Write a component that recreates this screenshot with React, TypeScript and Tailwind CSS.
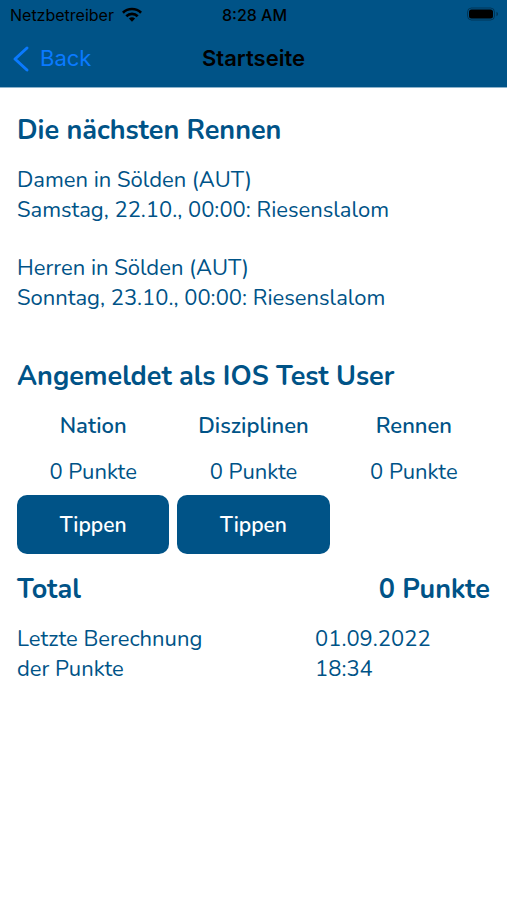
import React from 'react';

const races = [
  { title: 'Damen in Sölden (AUT)', event: 'Samstag, 22.10., 00:00: Riesenslalom' },
  { title: 'Herren in Sölden (AUT)', event: 'Sonntag, 23.10., 00:00: Riesenslalom' }
];

const categories = [
  { name: 'Nation', points: 0, open: true },
  { name: 'Disziplinen', points: 0, open: true },
  { name: 'Rennen', points: 0, open: false }
];

function WifiIcon() {
  return (
    <svg className="h-4 w-5" viewBox="0 0 20 16" fill="none" stroke="black" strokeWidth="2.7" aria-hidden="true">
      <path d="M0.9 5.7a13 13 0 0 1 18.2 0" />
      <path d="M4.3 9.2a8.2 8.2 0 0 1 11.4 0" />
      <path d="M10 14.7 6.9 11.6a4.5 4.5 0 0 1 6.2 0z" fill="black" stroke="none" />
    </svg>
  );
}

function BatteryIcon() {
  return (
    <svg className="h-4 w-8" viewBox="0 0 32 16" aria-hidden="true">
      <rect x="0.5" y="1" width="27" height="12" rx="4" fill="none" stroke="black" strokeOpacity="0.35" />
      <rect x="2" y="2.5" width="24" height="9" rx="2.5" fill="black" />
      <path d="M29.5 4.8c2 .8 2 3.6 0 4.4z" fill="black" fillOpacity="0.4" />
    </svg>
  );
}

function StatusBar() {
  return (
    <div className="grid grid-cols-3 items-center h-[30px] pl-[10px] pr-2 text-base text-black">
      <div className="flex items-center gap-2">
        <span>Netzbetreiber</span>
        <WifiIcon />
      </div>
      <span className="text-center font-medium">8:28 AM</span>
      <div className="flex justify-end">
        <BatteryIcon />
      </div>
    </div>
  );
}

function NavBar() {
  return (
    <nav className="grid grid-cols-3 items-center h-[57px] px-3">
      <a href="#back" className="flex items-center gap-2.5 text-[22px] text-[#0a7aff]">
        <svg className="h-7 w-[18px]" viewBox="0 0 18 28" fill="none" stroke="currentColor" strokeWidth="3" strokeLinecap="round" strokeLinejoin="round" aria-hidden="true">
          <path d="M15 3 3 14l12 11" />
        </svg>
        Back
      </a>
      <h1 className="text-center text-[22px] font-semibold text-black">Startseite</h1>
    </nav>
  );
}

export default function App() {
  return (
    <div className="min-h-screen bg-white">
      <header className="bg-[#005387] border-b border-[#8db3cc] font-[Inter,sans-serif]">
        <StatusBar />
        <NavBar />
      </header>

      <main className="px-[17px] pt-[25px] font-[Nunito,'Open_Sans',sans-serif] text-[22px] leading-[30px] text-[#005387]">
        <section>
          <h2 className="text-[27px] leading-9 font-bold">Die nächsten Rennen</h2>
          <div className="mt-4 flex flex-col gap-7">
            {races.map((race) => (
              <div key={race.title}>
                <p>{race.title}</p>
                <p>{race.event}</p>
              </div>
            ))}
          </div>
        </section>

        <section className="mt-[46px]">
          <h2 className="text-[27px] leading-9 font-bold">Angemeldet als IOS Test User</h2>
          <div className="-mx-1 mt-4">
            <table className="w-full table-fixed text-center">
              <thead>
                <tr>
                  {categories.map((c) => (
                    <th key={c.name} scope="col" className="px-1 pb-4 font-semibold">{c.name}</th>
                  ))}
                </tr>
              </thead>
              <tbody>
                <tr>
                  {categories.map((c) => (
                    <td key={c.name} className="px-1 pb-2">{c.points} Punkte</td>
                  ))}
                </tr>
                <tr>
                  {categories.map((c) => (
                    <td key={c.name} className="px-1">
                      {c.open && (
                        <button type="button" className="block h-[59px] w-full rounded-[10px] bg-[#005387] text-[21px] font-semibold text-white">
                          Tippen
                        </button>
                      )}
                    </td>
                  ))}
                </tr>
              </tbody>
            </table>
          </div>

          <div className="mt-[18px] flex justify-between text-[27px] leading-9 font-bold">
            <span>Total</span>
            <span>0 Punkte</span>
          </div>
          <div className="mt-4 flex">
            <p className="w-[63%]">
              Letzte Berechnung
              <br />
              der Punkte
            </p>
            <p>
              01.09.2022
              <br />
              18:34
            </p>
          </div>
        </section>
      </main>
    </div>
  );
}
